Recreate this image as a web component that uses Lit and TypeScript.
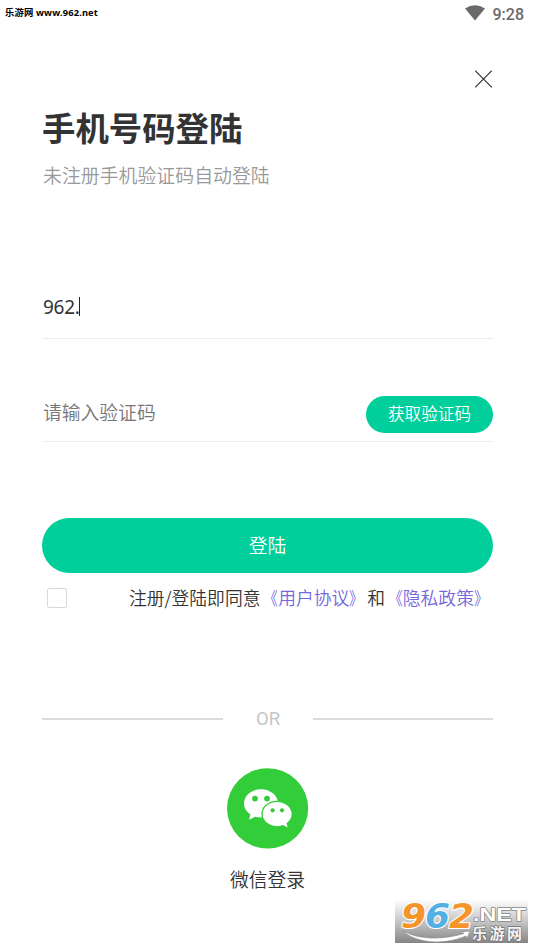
import { LitElement, html, css } from "lit";
import { customElement } from "lit/decorators.js";

@customElement("wifi-icon")
class WifiIcon extends LitElement {
  static styles = css`:host { display: block; width: 20px; height: 16px; } svg { display: block; }`;
  render() {
    return html`<svg width="20" height="16" viewBox="0 0 20 16"><path d="M0 3.6Q10-3 20 3.6L10 15.5Z" fill="#6a6a6a" /></svg>`;
  }
}

@customElement("wechat-icon")
class WechatIcon extends LitElement {
  static styles = css`:host { display: block; width: 82px; height: 82px; } svg { display: block; }`;
  render() {
    return html`<svg width="82" height="82" viewBox="0 0 82 82">
      <ellipse cx="40.6" cy="40.4" rx="40.6" ry="40.2" fill="#32cd39" />
      <path d="M34 21.3C24.500 21.300 17 27.500 17 35.400C17 40 19.600 43.800 23.500 46.500L22 51.700L28.300 48.700C30.200 49.300 32 49.500 34 49.500C43.500 49.500 51 43.200 51 35.400C51 27.500 43.500 21.300 34 21.300Z" fill="#fff" />
      <circle cx="28" cy="30.600" r="2.900" fill="#32cd39" /><circle cx="40" cy="30.600" r="2.900" fill="#32cd39" />
      <path d="M50 33.300C58.500 33.300 65.200 38.900 65.200 46.100C65.200 50.300 63.200 53.300 60.300 55.500L61.600 60.500L55.600 57.800C53.800 58.400 52 58.800 50 58.800C41.700 58.800 35 53.200 35 46.100C35 38.900 41.700 33.300 50 33.300Z" fill="#fff" stroke="#32cd39" stroke-width="1.300" />
      <circle cx="45.600" cy="42.300" r="2.100" fill="#32cd39" /><circle cx="55" cy="42.300" r="2.100" fill="#32cd39" />
    </svg>`;
  }
}

@customElement("site-logo")
class SiteLogo extends LitElement {
  static styles = css`
    :host { display: block; width: 133px; height: 43px; background: linear-gradient(#fdfdfd, #c8c8c8 48%, #858585); }
    svg { display: block; overflow: visible; }
    text { paint-order: stroke; stroke-linejoin: round; }
    .digit { font: italic bold 33px "DejaVu Sans", sans-serif; stroke: #fff; stroke-width: 2.2px; }
    .net { font: bold 18px "Liberation Sans", sans-serif; fill: #fff; stroke: #888; stroke-width: 1.3px; }
    .cn { font: bold 15px "Noto Sans CJK SC", sans-serif; fill: #f4f4f4; stroke: #707070; stroke-width: 1.3px; }
    .orange { fill: #f59428; }
    .blue { fill: #54afe3; }
  `;
  render() {
    return html`<svg width="133" height="43" viewBox="0 0 133 43">
      <path d="M7 30.500C24 40 47 40 69 33.500L66 32L75 31L72 38.500L71 36C47 46 21 43 7 30.500Z" fill="#fff" stroke="#888" stroke-width=".6" />
      <text class="digit orange" x="6" y="28" textLength="25" lengthAdjust="spacingAndGlyphs">9</text>
      <text class="digit blue" x="30" y="28" textLength="25" lengthAdjust="spacingAndGlyphs">6</text>
      <text class="digit orange" x="54" y="28" textLength="25" lengthAdjust="spacingAndGlyphs">2</text>
      <text class="net" x="78" y="20.5" textLength="53" lengthAdjust="spacingAndGlyphs">.NET</text>
      <text class="cn" x="77" y="39" textLength="50">乐游网</text>
    </svg>`;
  }
}

@customElement("app-root")
class AppRoot extends LitElement {
  static styles = css`
    :host { display: block; height: 949px; background: #fff; color: #333; overflow: hidden; position: relative;
      font-family: "Noto Sans CJK SC", sans-serif; font-weight: 350; }
    * { box-sizing: border-box; }
    .status { height: 28px; display: flex; justify-content: space-between; padding: 0 10px 0 5px; }
    .site { font: bold 9.3px/26px "Noto Sans", "Noto Sans CJK SC", sans-serif; color: #000; white-space: nowrap; letter-spacing: .16px; }
    .clock { display: flex; gap: 8px; padding-top: 5px; font: 500 16px/20px Roboto, sans-serif; color: #6a6a6a; }
    .page { padding: 0 41px 0 42px; display: flex; flex-direction: column; }
    .close { align-self: flex-end; margin-top: 42px; width: 18px; height: 18px; }
    svg { display: block; }
    h1 { margin: 14px 0 0; font-size: 33.4px; line-height: 50px; font-weight: 700; }
    .hint { font-size: 18.9px; line-height: 28px; margin: 9px 0 0 1px; color: #999; }
    .phone { display: flex; align-items: center; height: 64px; margin: 86px 0 0 1px; border-bottom: 1px solid #ececec;
      font: 400 19px/28px "Noto Sans", sans-serif; letter-spacing: -.3px; }
    .caret { width: 1px; height: 19px; margin-left: -1px; background: #222; }
    .code { display: flex; align-items: center; justify-content: space-between; height: 56px; margin: 47px 0 0 1px;
      border-bottom: 1px solid #eee; }
    .placeholder { font-size: 18.8px; line-height: 28px; padding-bottom: 4px; color: #777; }
    .send { width: 127px; height: 37px; margin-top: 2px; border-radius: 19px; background: #00ce9b; color: #fff; font-size: 16.6px;
      line-height: 35px; text-align: center; }
    .login { height: 55px; margin-top: 76px; border-radius: 28px; background: #00ce9b; color: #fff; font-size: 18.8px;
      line-height: 53px; text-align: center; }
    .terms { display: flex; align-items: center; height: 26px; margin-top: 12px; padding-left: 5px; }
    .box { width: 20px; height: 20px; border: 1px solid #d9d9d9; border-radius: 2px; }
    .agree { margin: -2px 0 0 62px; font-size: 17.8px; line-height: 26px; white-space: nowrap; }
    .link { color: #7567dc; }
    .open, .shut { display: inline-block; transform: scaleX(.8); }
    .open { transform-origin: right; }
    .shut { transform-origin: left; }
    .or { display: grid; grid-template-columns: 181px 1fr 180px; align-items: center; margin-top: 97px; height: 22px;
      color: #c6c6c6; text-align: center; font: 400 18.500px/22px Roboto, sans-serif; }
    .rule { height: 2px; background: #dcdcdc; }
    .wechat { display: flex; flex-direction: column; align-items: center; margin-top: 38px; font-size: 18.8px; line-height: 28px; gap: 15px; }
    .logo { position: absolute; left: 395px; top: 900px; }
  `;
  link(name: string) {
    return html`<span class="link"><span class="open">《</span>${name}<span class="shut">》</span></span>`;
  }
  render() {
    return html`
      <div class="status">
        <span class="site">乐游网 www.962.net</span>
        <div class="clock"><wifi-icon></wifi-icon><span>9:28</span></div>
      </div>
      <main class="page">
        <div class="close"><svg width="18" height="18" viewBox="0 0 18 18"><path d="M.2.7L16.800 17.300M16.800.7L.2 17.300" stroke="#333" stroke-width="1.200" /></svg></div>
        <h1>手机号码登陆</h1>
        <div class="hint">未注册手机验证码自动登陆</div>
        <div class="phone"><span>962.</span><span class="caret"></span></div>
        <div class="code"><span class="placeholder">请输入验证码</span><div class="send">获取验证码</div></div>
        <div class="login">登陆</div>
        <div class="terms">
          <span class="box"></span>
          <span class="agree">注册/登陆即同意${this.link("用户协议")}和${this.link("隐私政策")}</span>
        </div>
        <div class="or"><span class="rule"></span><span>OR</span><span class="rule"></span></div>
        <div class="wechat"><wechat-icon></wechat-icon><span>微信登录</span></div>
      </main>
      <site-logo class="logo"></site-logo>
    `;
  }
}
